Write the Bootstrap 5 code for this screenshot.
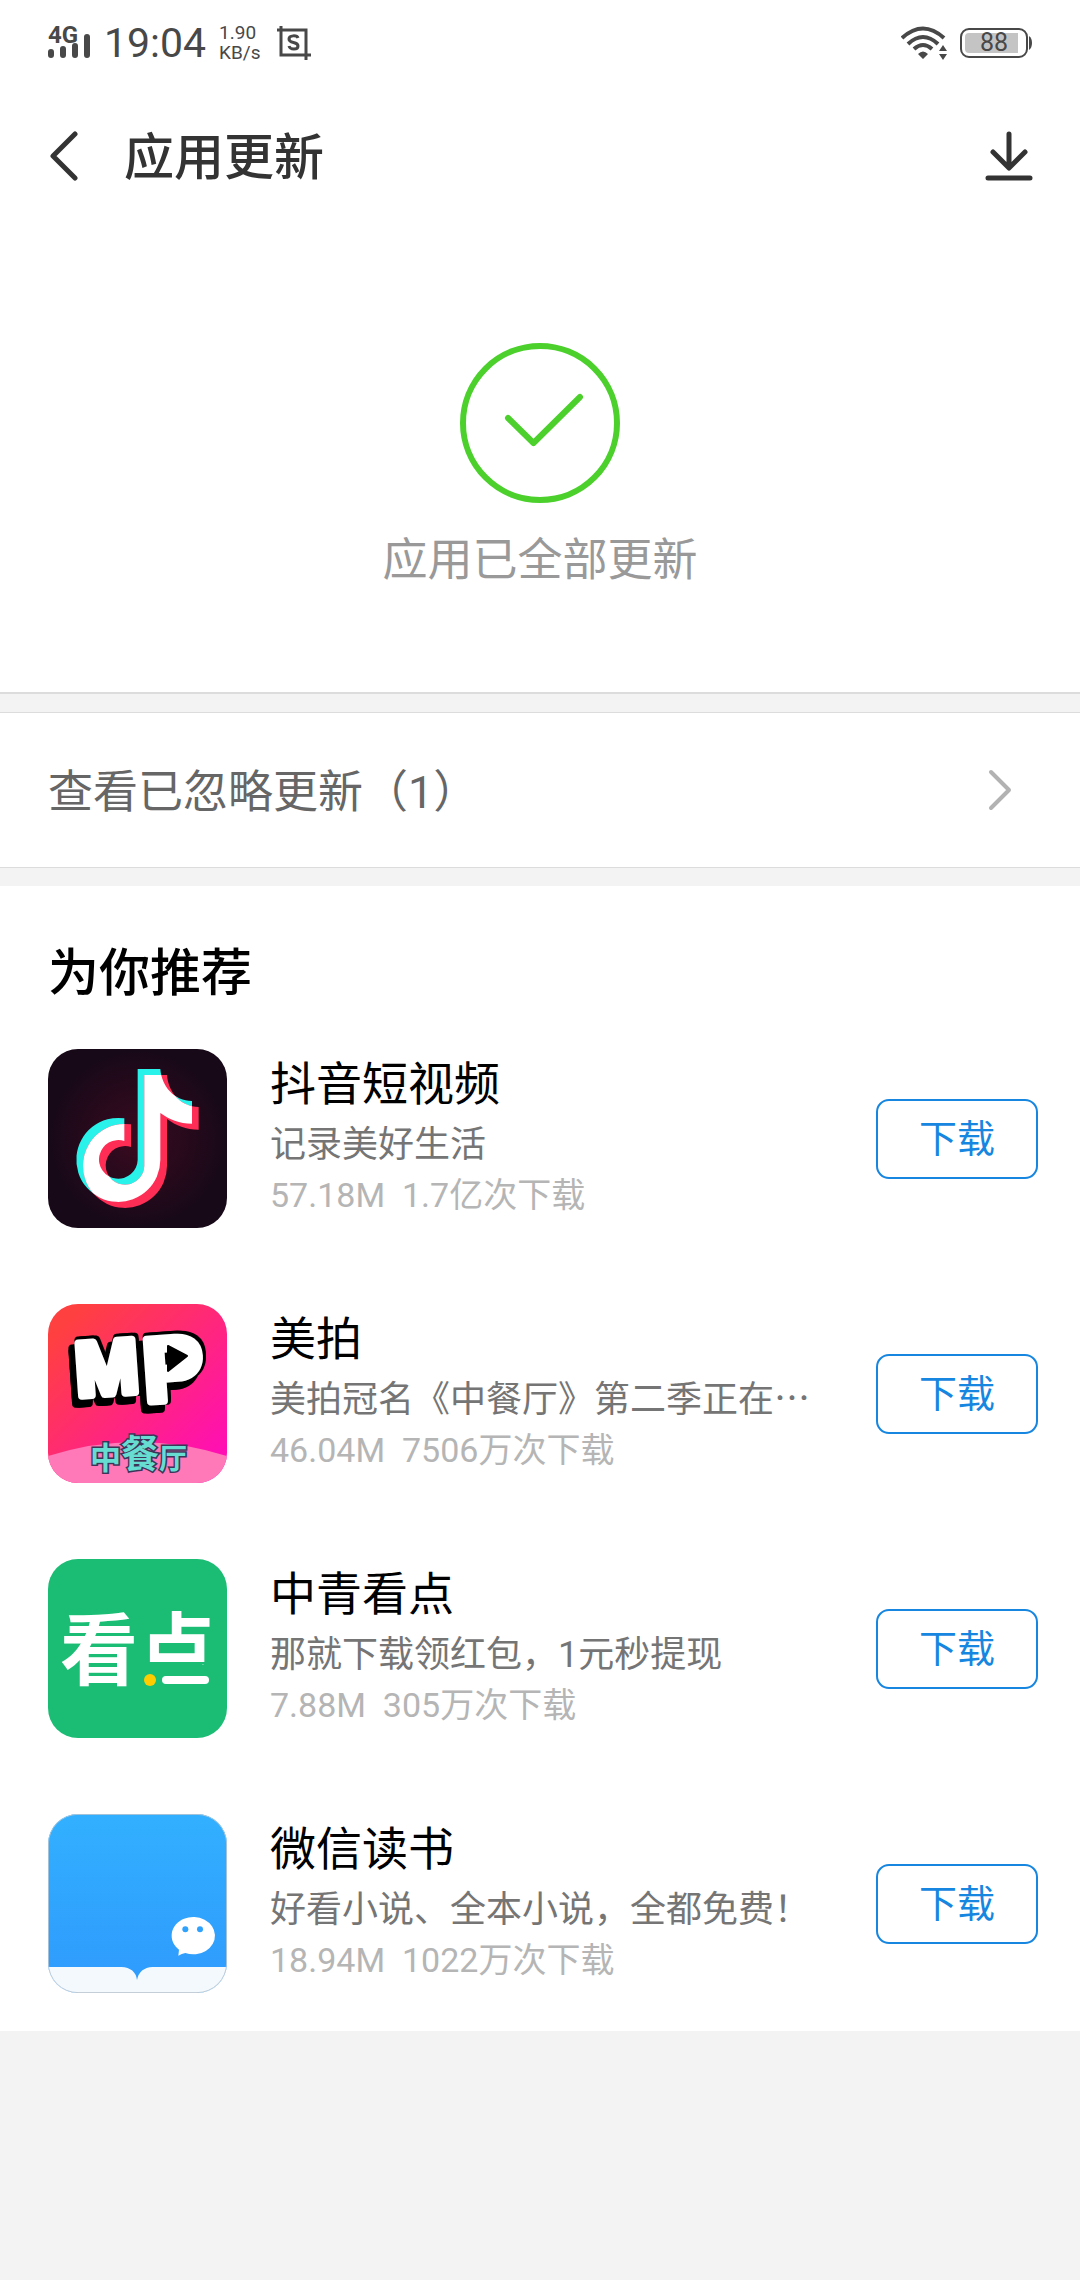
<!DOCTYPE html>
<html lang="zh-CN">
<head>
    <meta charset="UTF-8">
    <meta name="viewport" content="width=device-width, initial-scale=1.0">
    <title>应用更新</title>
    <link href="https://cdn.jsdelivr.net/npm/bootstrap@5.3.0/dist/css/bootstrap.min.css" rel="stylesheet">

    <style>
        body {
            background: #f3f3f3;
            color: #000;
            font-family: Roboto, "Noto Sans CJK SC", sans-serif;
            min-height: 100vh;
        }
        svg {
            display: block;
            flex-shrink: 0;
        }
        .status-bar {
            height: 86px;
            padding: 0 48px;
            color: #484848;
        }
        .net-type {
            font-size: 24px;
            font-weight: 700;
            line-height: 20px;
        }
        .clock {
            font-size: 41px;
            line-height: 48px;
        }
        .net-speed {
            margin-left: 13px;
            font-size: 19px;
            line-height: 20px;
        }
        .battery {
            width: 68px;
            height: 30px;
            margin-left: 13px;
            border: 2px solid #484848;
            border-radius: 9px;
            padding: 3px;
        }
        .battery-level {
            background: linear-gradient(90deg, #c4c4c4 92%, transparent 92%);
            border-radius: 4px;
            font-size: 25px;
            line-height: 20px;
        }
        .top-bar {
            height: 140px;
            padding: 0 47px 0 48px;
            color: #333;
        }
        .page-title {
            margin: 4px auto 0 44px;
            font-size: 50px;
            font-weight: 500;
            line-height: 74px;
        }
        .done-panel {
            padding: 117px 0 94px;
            border-bottom: 2px solid #dcdcdc;
        }
        .done-text {
            margin-top: 21px;
            color: #999;
            font-size: 45px;
            line-height: 74px;
        }
        .ignored-row {
            margin: 18px 0;
            padding: 0 68px 0 48px;
            height: 156px;
            border: solid #dcdcdc;
            border-width: 1px 0;
            color: #666;
            font-size: 45px;
        }
        .ignored-row span {
            padding-top: 5px;
        }
        .ignored-row:hover {
            color: #333;
        }
        .section-title {
            padding: 50px 48px 0;
            font-size: 51px;
            font-weight: 500;
            line-height: 75px;
        }
        .app-item {
            padding: 38px 42px 38px 48px;
            gap: 43px;
        }
        .app-icon {
            width: 179px;
            height: 179px;
            border-radius: 30px;
        }
        .app-name {
            font-size: 46px;
            line-height: 70px;
        }
        .app-desc {
            color: #757575;
            font-size: 36px;
            line-height: 52px;
        }
        .app-meta {
            color: #b5b5b5;
            font-size: 34px;
            line-height: 48px;
        }
        .btn-get {
            width: 162px;
            height: 80px;
            border: 2px solid #1686e0;
            border-radius: 13px;
            color: #1686e0;
            font-size: 38px;
            line-height: 52px;
        }
        .btn-get:hover {
            background: #1686e0;
            color: #fff;
        }
        .mp-logo {
            font-family: "Liberation Sans", sans-serif;
            font-weight: 700;
            stroke-linejoin: round;
            filter: drop-shadow(3px 0 0 #000) drop-shadow(0 -3px 0 #000) drop-shadow(-6px 8px 0 #000);
        }
        .cjk-logo {
            font-family: "Noto Sans CJK SC", sans-serif;
            font-weight: 700;
        }
    </style>
</head>
<body>
    <div class="bg-white">
        <!-- status bar -->
        <div class="status-bar d-flex justify-content-between align-items-center">
            <div class="d-flex align-items-center">
                <div>
                    <div class="net-type">4G</div>
                    <svg width="44" height="16" viewBox="0 0 44 16" overflow="visible" stroke="currentColor" stroke-width="6" stroke-linecap="round">
                        <path d="M3 7v3M15 4v6M27 1v9M39 -8v18"/>
                    </svg>
                </div>
                <div class="clock ms-2 ps-1">19:04</div>
                <div class="net-speed">1.90<br>KB/s</div>
                <svg class="ms-3" width="34" height="34" viewBox="0 0 34 34" fill="none" stroke="currentColor" stroke-width="3">
                    <path d="M0 4H29V34M4 0V29H34"/>
                    <path d="M21 12C20 9 12 9 12 13C12 18 21 15 21 20C21 24 13 24 12 20"/>
                </svg>
            </div>
            <div class="d-flex align-items-center">
                <svg width="46" height="34" viewBox="0 0 46 34" fill="none" stroke="currentColor" stroke-width="4">
                    <path d="M1 12Q22 -7 43 12M7 18Q22 4 37 18M13 23Q22 15 31 23"/>
                    <path d="M22 33l-5-5q5-5 10 0zM38 25l4-6 4 6zM38 28l4 6 4-6z" fill="currentColor" stroke="none"/>
                </svg>
                <div class="battery">
                    <div class="battery-level text-center">88</div>
                </div>
                <svg width="4" height="14" viewBox="0 0 4 14"><path d="M1 0Q4 2 4 7T1 14z" fill="#484848"/></svg>
            </div>
        </div>

        <!-- title bar -->
        <header class="top-bar d-flex align-items-center">
            <button type="button" class="btn p-0 border-0" aria-label="返回">
                <svg width="32" height="50" viewBox="0 0 32 50" fill="none" stroke="#333" stroke-width="5" stroke-linecap="round" stroke-linejoin="round">
                    <path d="M27 3L5 25L27 47"/>
                </svg>
            </button>
            <h1 class="page-title">应用更新</h1>
            <button type="button" class="btn p-0 border-0" aria-label="下载管理">
                <svg width="48" height="50" viewBox="0 0 48 50" fill="none" stroke="#333" stroke-width="5" stroke-linecap="round" stroke-linejoin="round">
                    <path d="M24 3V36M8 21L24 37L40 21M3 47H45"/>
                </svg>
            </button>
        </header>

        <section class="done-panel d-flex flex-column align-items-center">
            <svg width="160" height="160" viewBox="0 0 160 160" fill="none" stroke="#4bd02c" stroke-width="6" stroke-linecap="round" stroke-linejoin="round">
                <circle cx="80" cy="80" r="77"/>
                <path d="M48 75L73.500 100L120 54"/>
            </svg>
            <div class="done-text">应用已全部更新</div>
        </section>
    </div>

    <a href="#" class="ignored-row bg-white d-flex justify-content-between align-items-center text-decoration-none">
        <span>查看已忽略更新（1）</span>
        <svg width="24" height="42" viewBox="0 0 24 42" fill="none" stroke="#b2b2b2" stroke-width="4" stroke-linecap="round" stroke-linejoin="round">
            <path d="M3 3L21 21L3 39"/>
        </svg>
    </a>

    <!-- recommended apps -->
    <main class="bg-white">
        <h2 class="section-title mb-0">为你推荐</h2>

        <div class="app-item d-flex align-items-center">
            <svg class="app-icon" viewBox="56 58 537 537">
                <defs>
                    <radialGradient id="nightBg">
                        <stop offset="0" stop-color="#3a0a20"/>
                        <stop offset="1" stop-color="#170918"/>
                    </radialGradient>
                    <path id="note" d="M325 118H393C397 172 436 213 488 214V282C450 282 420 270 393 250V391A126 126 0 1 1 285 266V334A58 58 0 1 0 325 391Z"/>
                    <clipPath id="noteClip"><use href="#note"/></clipPath>
                </defs>
                <rect x="56" y="58" width="537" height="537" fill="url(#nightBg)"/>
                <use href="#note" fill="#29f2ea"/>
                <use href="#note" x="20" y="18" fill="#fe2d55"/>
                <g clip-path="url(#noteClip)"><use href="#note" x="20" y="18" fill="#fff"/></g>
            </svg>
            <div class="flex-grow-1 align-self-start">
                <div class="app-name">抖音短视频</div>
                <div class="app-desc">记录美好生活</div>
                <div class="app-meta">57.18M&nbsp; 1.7亿次下载</div>
            </div>
            <button type="button" class="btn btn-get p-0">下载</button>
        </div>

        <div class="app-item d-flex align-items-center">
            <svg class="app-icon" viewBox="0 0 179 179">
                <defs>
                    <linearGradient id="pinkBg" x1="0" y1="0" x2="1" y2="1">
                        <stop offset="0.100" stop-color="#ff4040"/>
                        <stop offset="0.900" stop-color="#ff0fb4"/>
                    </linearGradient>
                </defs>
                <rect width="179" height="179" fill="url(#pinkBg)"/>
                <path d="M0 152Q89 124 179 152V179H0z" fill="#ff78b8"/>
                <g class="mp-logo" fill="#fff" stroke="#fff" stroke-width="8">
                    <text x="29" y="92" font-size="76" transform="rotate(-4 29 92)">M</text>
                    <text x="97" y="98" font-size="90" transform="rotate(-4 97 98)">P</text>
                </g>
                <path d="M120 42L139 52L120 67z" fill="#000" stroke="#000" stroke-width="2" stroke-linejoin="round"/>
                <g class="cjk-logo" fill="#67ddd2" stroke="#3d3558" stroke-width="3" paint-order="stroke">
                    <text x="42" y="165" font-size="31">中</text>
                    <text x="73" y="163" font-size="38">餐</text>
                    <text x="111" y="165" font-size="28">厅</text>
                </g>
            </svg>
            <div class="flex-grow-1 align-self-start">
                <div class="app-name">美拍</div>
                <div class="app-desc">美拍冠名《中餐厅》第二季正在⋯</div>
                <div class="app-meta">46.04M&nbsp; 7506万次下载</div>
            </div>
            <button type="button" class="btn btn-get p-0">下载</button>
        </div>

        <div class="app-item d-flex align-items-center">
            <svg class="app-icon" viewBox="0 0 179 179">
                <rect width="179" height="179" fill="#1bbd74"/>
                <g class="cjk-logo" fill="#fff">
                    <text x="12" y="120" font-size="78">看</text>
                    <text x="90" y="119" font-size="78">点</text>
                </g>
                <!-- the four dots of the last character become a dot and a bar -->
                <rect x="91" y="106" width="80" height="26" fill="#1bbd74"/>
                <circle cx="102" cy="121" r="6" fill="#fc0"/>
                <path d="M118 121H157" stroke="#fff" stroke-width="8" stroke-linecap="round"/>
            </svg>
            <div class="flex-grow-1 align-self-start">
                <div class="app-name">中青看点</div>
                <div class="app-desc">那就下载领红包，1元秒提现</div>
                <div class="app-meta">7.88M&nbsp; 305万次下载</div>
            </div>
            <button type="button" class="btn btn-get p-0">下载</button>
        </div>

        <div class="app-item d-flex align-items-center">
            <svg class="app-icon" viewBox="56 58 537 537">
                <defs>
                    <linearGradient id="skyBg" x1="0" y1="0" x2="0" y2="1">
                        <stop offset="0" stop-color="#32b0ff"/>
                        <stop offset="0.850" stop-color="#2f9dfd"/>
                    </linearGradient>
                </defs>
                <rect x="56" y="58" width="537" height="537" fill="url(#skyBg)"/>
                <path d="M56 517H276Q318 519 323 556Q330 519 370 517H593V595H56z" fill="#f4f9fd"/>
                <path d="M447 483L449 465A65 56 0 1 1 468 475Q457 477 447 483z" fill="#fff"/>
                <g fill="#2fa2fe">
                    <circle cx="468" cy="404" r="9"/>
                    <circle cx="512" cy="404" r="9"/>
                </g>
                <rect x="57" y="59" width="535" height="535" rx="89" fill="none" stroke="#b9c6d2" stroke-width="3"/>
            </svg>
            <div class="flex-grow-1 align-self-start">
                <div class="app-name">微信读书</div>
                <div class="app-desc">好看小说、全本小说，全都免费！</div>
                <div class="app-meta">18.94M&nbsp; 1022万次下载</div>
            </div>
            <button type="button" class="btn btn-get p-0">下载</button>
        </div>
    </main>
    <script src="https://cdn.jsdelivr.net/npm/bootstrap@5.3.0/dist/js/bootstrap.bundle.min.js"></script>
</body>
</html>
